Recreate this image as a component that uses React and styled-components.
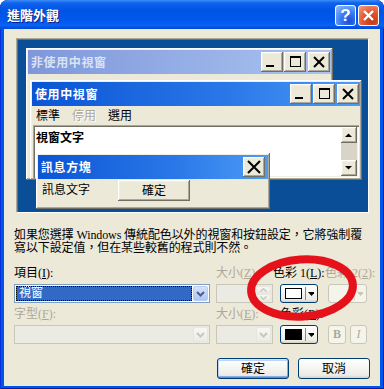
import React from 'react';
import styled, { createGlobalStyle, css } from 'styled-components';

const GlobalStyle = createGlobalStyle`
  html, body {
    margin: 0;
    padding: 0;
    background: #fff;
  }
  body {
    font-family: "Liberation Serif", "Noto Sans CJK TC", serif;
    font-size: 12px;
    color: #000;
  }
`;

const CJK = `"Liberation Serif", "Noto Sans CJK TC", serif`;

// classic 3d edges used by the preview windows
const raised = css`
  background: #ECE9D8;
  box-shadow: inset -1px -1px #716F64, inset 1px 1px #FFFFFF,
    inset -2px -2px #ACA899, inset 2px 2px #F1EFE2;
`;

const Dialog = styled.div`
  position: relative;
  width: 384px;
  height: 389px;
  box-sizing: border-box;
  display: flex;
  flex-direction: column;
  background: #0055EA;
  border-radius: 8px 8px 0 0;
  box-shadow: inset 1px 0 #0831D9, inset -1px 0 #001EA0, inset 0 -1px #001EA0;
  overflow: hidden;
`;

const TitleBar = styled.div`
  height: 29px;
  flex: none;
  display: flex;
  align-items: center;
  padding: 0 5px 0 7px;
  border-radius: 8px 8px 0 0;
  background: linear-gradient(180deg, #3D8EF8 0%, #0F63EC 10%, #0054E3 35%, #0058EC 70%, #0862F2 88%, #0046D6 100%);
`;

const TitleText = styled.div`
  flex: 1;
  font-family: "Noto Sans CJK TC", sans-serif;
  font-weight: bold;
  font-size: 13px;
  line-height: 16px;
  color: #fff;
  text-shadow: 1px 1px #0A1E8C;
  margin-top: 1px;
`;

const TitleButtons = styled.div`
  display: flex;
  gap: 2px;
  margin-top: 2px;
`;

const CapButton = styled.div`
  width: 21px;
  height: 21px;
  box-sizing: border-box;
  border: 1px solid #fff;
  border-radius: 3px;
  display: flex;
  align-items: center;
  justify-content: center;
  color: #fff;
  font-family: "Liberation Sans", sans-serif;
  font-weight: bold;
  font-size: 17px;
  background: ${p => p.$close
    ? 'radial-gradient(circle at 70% 80%, #C33A14 0%, #E2552E 45%, #F3A083 100%)'
    : 'radial-gradient(circle at 70% 80%, #1A4FD8 0%, #3A7CF5 45%, #9CC0FB 100%)'};
`;

const Body = styled.div`
  flex: 1;
  margin: 0 4px 3px;
  padding: 9px 10px 0 10px;
  background: #ECE9D8;
  display: flex;
  flex-direction: column;
`;

const Preview = styled.div`
  position: relative;
  margin-left: 2px;
  width: 353px;
  height: 175px;
  flex: none;
  box-sizing: border-box;
  background: #0A4E98;
  border: 1px solid;
  border-color: #ACA899 #FFFFFF #FFFFFF #ACA899;
  box-shadow: inset 1px 1px #716F64;
  overflow: hidden;
`;

const PreviewWindow = styled.div`
  position: absolute;
  left: ${p => p.$x}px;
  top: ${p => p.$y}px;
  width: ${p => p.$w}px;
  height: ${p => p.$h}px;
  box-sizing: border-box;
  padding: 2px;
  display: flex;
  flex-direction: column;
  ${raised};
`;

const Caption = styled.div`
  height: 24px;
  flex: none;
  display: flex;
  align-items: center;
  padding: 0 ${p => p.$pr ?? 1}px 0 3px;
  background: ${p => p.$active
    ? 'linear-gradient(90deg, #0A55D4 0%, #2A78E8 60%, #4C9CF6 100%)'
    : 'linear-gradient(90deg, #7F97DA 0%, #98B2E8 60%, #A9C4F0 100%)'};
  color: ${p => p.$active ? '#FFFFFF' : '#D9E3F6'};
`;

const CaptionText = styled.div`
  flex: 1;
  font-family: "Noto Sans CJK TC", sans-serif;
  font-weight: bold;
  font-size: 12px;
  letter-spacing: 0.6px;
  line-height: 16px;
`;

const WinButton = styled.div`
  width: 22px;
  height: 20px;
  flex: none;
  margin-left: ${p => p.$gap || 0}px;
  ${raised};
  display: flex;
  svg {
    display: block;
  }
`;

const MenuBar = styled.div`
  height: 19px;
  flex: none;
  display: flex;
  align-items: center;
  gap: 12px;
  padding-left: 4px;
`;

const MenuItem = styled.span`
  font-family: ${CJK};
  font-size: 12px;
  line-height: 14px;
  color: ${p => p.$disabled ? '#ACA899' : '#000'};
  text-shadow: ${p => p.$disabled ? '1px 1px #fff' : 'none'};
`;

const TextArea = styled.div`
  flex: 1;
  margin: 0 1px;
  padding: 2px;
  display: flex;
  background: #fff;
  box-shadow: inset 1px 1px #ACA899, inset 2px 2px #716F64,
    inset -1px -1px #fff, inset -2px -2px #F1EFE2;
`;

const WindowText = styled.div`
  flex: 1;
  padding-left: 1px;
  font-family: "Noto Sans CJK TC", sans-serif;
  font-weight: bold;
  font-size: 12px;
  line-height: 20px;
`;

const ScrollBar = styled.div`
  width: 16px;
  display: flex;
  flex-direction: column;
  background: #F1EFE2;
`;

const ScrollButton = styled.div`
  width: 16px;
  height: 16px;
  flex: none;
  ${raised};
  svg {
    display: block;
  }
`;

const ScrollTrack = styled.div`
  flex: 1;
  background: #D8D4C8;
`;

const MessageBody = styled.div`
  flex: 1;
  display: flex;
  align-items: flex-start;
  padding-left: 4px;
`;

const MessageText = styled.div`
  width: 76px;
  padding-top: 2px;
  font-family: ${CJK};
  font-size: 12px;
  line-height: 18px;
`;

const ClassicButton = styled.div`
  width: 72px;
  height: 21px;
  margin-top: 1px;
  ${raised};
  display: flex;
  align-items: center;
  justify-content: center;
  font-size: 12px;
  line-height: 14px;
`;

const Desc = styled.p`
  margin: 16px 0 0 0;
  font-size: 12px;
  line-height: 13px;
  white-space: nowrap;
  letter-spacing: -0.1px;
`;

const FormGrid = styled.div`
  margin-top: 12px;
  display: grid;
  grid-template-columns: 202px 64px 48px 39px;
  grid-template-rows: 12px 19px 12px 19px;
  row-gap: 5px;
`;

const FieldLabel = styled.div`
  font-size: 12px;
  line-height: 12px;
  white-space: nowrap;
  margin-left: ${p => p.$shift || 0}px;
  color: ${p => p.$disabled ? '#ACA899' : '#000'};
  u {
    text-decoration-thickness: 1px;
  }
`;

const Combo = styled.div`
  width: ${p => p.$w}px;
  height: 19px;
  box-sizing: border-box;
  border: 1px solid ${p => p.$disabled ? '#C9C7BA' : '#7F9DB9'};
  background: ${p => p.$disabled ? '#EBEBE4' : '#fff'};
  padding: 1px;
  display: flex;
  gap: 1px;
`;

const ComboSelected = styled.div`
  flex: 1;
  box-sizing: border-box;
  background: #316AC5;
  color: #fff;
  outline: 1px dotted #000;
  outline-offset: -1px;
  padding-left: 3px;
  font-size: 12px;
  line-height: 15px;
`;

const ComboValue = styled.div`
  flex: 1;
`;

const DropButton = styled.div`
  width: 15px;
  flex: none;
  box-sizing: border-box;
  border: 1px solid ${p => p.$disabled ? '#E6E5DE' : '#B9CAF3'};
  border-radius: 2px;
  background: ${p => p.$disabled
    ? 'linear-gradient(180deg, #F7F7F4, #EDECE6)'
    : 'linear-gradient(180deg, #D6E2FC 0%, #C2D3FA 50%, #AFC5F5 100%)'};
  display: flex;
  align-items: center;
  justify-content: center;
`;

const SpinButtons = styled.div`
  width: 15px;
  flex: none;
  display: flex;
  flex-direction: column;
  gap: 1px;
`;

const SpinHalf = styled.div`
  flex: 1;
  border: 1px solid #E6E5DE;
  border-radius: 2px;
  background: linear-gradient(180deg, #F7F7F4, #EDECE6);
  display: flex;
  align-items: center;
  justify-content: center;
`;

const ColorButton = styled.div`
  width: ${p => p.$w || 38}px;
  height: 19px;
  box-sizing: border-box;
  border: 1px solid ${p => p.$disabled ? '#C9C7BA' : '#003C74'};
  border-radius: 3px;
  background: ${p => p.$disabled
    ? '#F5F4EA'
    : 'linear-gradient(180deg, #FFFFFF 0%, #F4F4F0 50%, #ECEBE6 85%, #D6D0C5 100%)'};
  display: flex;
  align-items: center;
  padding: 0 3px 0 4px;
`;

const Swatch = styled.div`
  width: 21px;
  height: 11px;
  box-sizing: border-box;
  border: 1px solid #000;
  background: ${p => p.$color};
  visibility: ${p => p.$hidden ? 'hidden' : 'visible'};
`;

const Divider = styled.div`
  width: 1px;
  height: 13px;
  margin: 0 2px 0 3px;
  background: ${p => p.$disabled ? '#D8D6CA' : '#8C8A7E'};
`;

const StyleButtons = styled.div`
  display: flex;
  gap: 4px;
`;

const StyleButton = styled.div`
  width: ${p => p.$w}px;
  height: 19px;
  box-sizing: border-box;
  border: 1px solid #C9C7BA;
  border-radius: 3px;
  background: #F5F4EA;
  color: #ACA899;
  display: flex;
  align-items: center;
  justify-content: center;
  font-family: "Liberation Serif", serif;
  font-size: 12px;
  font-weight: ${p => p.$bold ? 'bold' : 'normal'};
  font-style: ${p => p.$italic ? 'italic' : 'normal'};
`;

const ButtonRow = styled.div`
  margin-top: 14px;
  display: flex;
  justify-content: flex-end;
  gap: 9px;
`;

const PushButton = styled.div`
  width: 72px;
  height: 21px;
  box-sizing: border-box;
  border: 1px solid #003C74;
  border-radius: 3px;
  background: linear-gradient(180deg, #FFFFFF 0%, #F4F4F0 50%, #ECEBE6 85%, #D6D0C5 100%);
  display: flex;
  align-items: center;
  justify-content: center;
  font-size: 12px;
  line-height: 14px;
  box-shadow: ${p => p.$default
    ? 'inset 0 1px #CEE7FF, inset 0 -1px #6982EE, inset 1px 0 #BCD4F6, inset -1px 0 #89ADE4, inset 0 2px #BCD4F6, inset 0 -2px #89ADE4'
    : 'none'};
`;

const Highlight = styled.svg`
  position: absolute;
  left: 243px;
  top: 252px;
  pointer-events: none;
`;

const Minimize = () => (
  <svg width="22" height="20">
    <rect x="5" y="13" width="8" height="2" fill="#000" />
  </svg>
);

const Maximize = () => (
  <svg width="22" height="20">
    <rect x="6.5" y="4.5" width="10" height="10" fill="none" stroke="#000" />
    <rect x="6" y="4" width="11" height="2" fill="#000" />
  </svg>
);

const CloseGlyph = ({ w = 22, h = 20, s = 10 }) => {
  const x = (w - s) / 2;
  const y = (h - s) / 2;
  return (
    <svg width={w} height={h}>
      <path d={`M${x} ${y} L${x + s} ${y + s} M${x + s} ${y} L${x} ${y + s}`} stroke="#000" strokeWidth="2" />
    </svg>
  );
};

const WindowButtons = () => (
  <>
    <WinButton><Minimize /></WinButton>
    <WinButton $gap={1}><Maximize /></WinButton>
    <WinButton $gap={2}><CloseGlyph /></WinButton>
  </>
);

const Chevron = ({ color = '#4D6185' }) => (
  <svg width="9" height="6">
    <path d="M1 1 L4.5 4.5 L8 1" fill="none" stroke={color} strokeWidth="2" />
  </svg>
);

const SmallArrow = ({ color = '#000' }) => (
  <svg width="7" height="4">
    <path d="M0 0 H7 L3.5 4 Z" fill={color} />
  </svg>
);

export default function App() {
  return (
    <>
      <GlobalStyle />
      <Dialog>
        <TitleBar>
          <TitleText>進階外觀</TitleText>
          <TitleButtons>
            <CapButton>?</CapButton>
            <CapButton $close>
              <svg width="13" height="13">
                <path d="M2 2 L11 11 M11 2 L2 11" stroke="#fff" strokeWidth="2.4" />
              </svg>
            </CapButton>
          </TitleButtons>
        </TitleBar>

        <Body>
          <Preview>
            <PreviewWindow $x={9} $y={9} $w={307} $h={132}>
              <Caption $pr={1}>
                <CaptionText>非使用中視窗</CaptionText>
                <WindowButtons />
              </Caption>
            </PreviewWindow>

            <PreviewWindow $x={13} $y={41} $w={332} $h={100}>
              <Caption $active $pr={1}>
                <CaptionText>使用中視窗</CaptionText>
                <WindowButtons />
              </Caption>
              <MenuBar>
                <MenuItem>標準</MenuItem>
                <MenuItem $disabled>停用</MenuItem>
                <MenuItem>選用</MenuItem>
              </MenuBar>
              <TextArea>
                <WindowText>視窗文字</WindowText>
                <ScrollBar>
                  <ScrollButton>
                    <svg width="16" height="16"><path d="M4 10 H11 L7.5 6.5 Z" fill="#000" /></svg>
                  </ScrollButton>
                  <ScrollTrack />
                  <ScrollButton>
                    <svg width="16" height="16"><path d="M4 6 H11 L7.5 9.5 Z" fill="#000" /></svg>
                  </ScrollButton>
                </ScrollBar>
              </TextArea>
            </PreviewWindow>

            <PreviewWindow $x={19} $y={114} $w={234} $h={56}>
              <Caption $active $pr={3}>
                <CaptionText>訊息方塊</CaptionText>
                <WinButton>
                  <CloseGlyph w={22} h={20} s={12} />
                </WinButton>
              </Caption>
              <MessageBody>
                <MessageText>訊息文字</MessageText>
                <ClassicButton>確定</ClassicButton>
              </MessageBody>
            </PreviewWindow>
          </Preview>

          <Desc>
            如果您選擇 Windows 傳統配色以外的視窗和按鈕設定，它將強制覆
            <br />
            寫以下設定值，但在某些較舊的程式則不然。
          </Desc>

          <FormGrid>
            <FieldLabel>項目(<u>I</u>):</FieldLabel>
            <FieldLabel $disabled>大小(<u>Z</u>):</FieldLabel>
            <FieldLabel $shift={-7}>色彩 1(<u>L</u>):</FieldLabel>
            <FieldLabel $disabled $shift={-3}>色彩 2(<u>2</u>):</FieldLabel>

            <Combo $w={196}>
              <ComboSelected>視窗</ComboSelected>
              <DropButton><Chevron /></DropButton>
            </Combo>
            <Combo $w={57} $disabled>
              <ComboValue />
              <SpinButtons>
                <SpinHalf>
                  <svg width="7" height="4"><path d="M0.5 3.5 L3.5 0.8 L6.5 3.5" fill="none" stroke="#C9C7BA" strokeWidth="1.4" /></svg>
                </SpinHalf>
                <SpinHalf>
                  <svg width="7" height="4"><path d="M0.5 0.5 L3.5 3.2 L6.5 0.5" fill="none" stroke="#C9C7BA" strokeWidth="1.4" /></svg>
                </SpinHalf>
              </SpinButtons>
            </Combo>
            <ColorButton>
              <Swatch $color="#FFFFFF" />
              <Divider />
              <SmallArrow />
            </ColorButton>
            <ColorButton $w={39} $disabled>
              <Swatch $color="#F5F4EA" $hidden />
              <Divider $disabled />
              <SmallArrow color="#C9C7BA" />
            </ColorButton>

            <FieldLabel $disabled>字型(<u>F</u>):</FieldLabel>
            <FieldLabel $disabled>大小(<u>E</u>):</FieldLabel>
            <FieldLabel>色彩(<u>R</u>):</FieldLabel>
            <span />

            <Combo $w={196} $disabled>
              <ComboValue />
              <DropButton $disabled><Chevron color="#C9C7BA" /></DropButton>
            </Combo>
            <Combo $w={57} $disabled>
              <ComboValue />
              <DropButton $disabled><Chevron color="#C9C7BA" /></DropButton>
            </Combo>
            <ColorButton>
              <Swatch $color="#000000" />
              <Divider />
              <SmallArrow />
            </ColorButton>
            <StyleButtons>
              <StyleButton $w={18} $bold>B</StyleButton>
              <StyleButton $w={17} $italic>I</StyleButton>
            </StyleButtons>
          </FormGrid>

          <ButtonRow>
            <PushButton $default>確定</PushButton>
            <PushButton>取消</PushButton>
          </ButtonRow>
        </Body>

        <Highlight width="118" height="74" viewBox="0 0 118 74">
          <ellipse cx="59" cy="36" rx="51" ry="28.5" fill="none" stroke="#E5121B" strokeWidth="8" transform="rotate(-4 59 36)" />
        </Highlight>
      </Dialog>
    </>
  );
}
